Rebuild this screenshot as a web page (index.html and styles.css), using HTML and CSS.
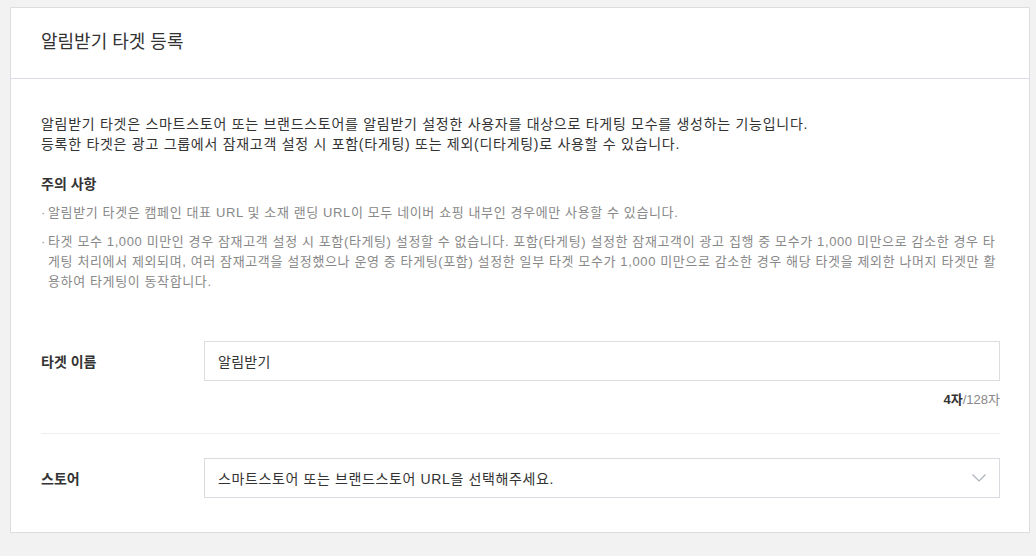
FILE: index.html
```html
<!DOCTYPE html>
<html lang="ko">
<head>
<meta charset="utf-8">
<title>알림받기 타겟 등록</title>
<link rel="stylesheet" href="styles.css">
</head>
<body>
<div class="page">
  <section class="card">
    <header class="card-header">
      <h1 class="title">알림받기 타겟 등록</h1>
    </header>
    <div class="card-body">
      <p class="intro">알림받기 타겟은 스마트스토어 또는 브랜드스토어를 알림받기 설정한 사용자를 대상으로 타게팅 모수를 생성하는 기능입니다.<br>등록한 타겟은 광고 그룹에서 잠재고객 설정 시 포함(타게팅) 또는 제외(디타게팅)로 사용할 수 있습니다.</p>
      <h2 class="notice-title">주의 사항</h2>
      <ul class="notice-list">
        <li>알림받기 타겟은 캠페인 대표 URL 및 소재 랜딩 URL이 모두 네이버 쇼핑 내부인 경우에만 사용할 수 있습니다.</li>
        <li>타겟 모수 1,000 미만인 경우 잠재고객 설정 시 포함(타게팅) 설정할 수 없습니다. 포함(타게팅) 설정한 잠재고객이 광고 집행 중 모수가 1,000 미만으로 감소한 경우 타게팅 처리에서 제외되며, 여러 잠재고객을 설정했으나 운영 중 타게팅(포함) 설정한 일부 타겟 모수가 1,000 미만으로 감소한 경우 해당 타겟을 제외한 나머지 타겟만 활용하여 타게팅이 동작합니다.</li>
      </ul>

      <div class="form">
        <div class="field">
          <div class="field-row">
            <label class="field-label" for="name">타겟 이름</label>
            <div class="input-box">
              <input id="name" class="text-input" type="text" value="알림받기">
            </div>
          </div>
          <div class="counter"><strong>4자</strong>/128자</div>
        </div>
        <div class="field field-last">
          <div class="field-row">
            <span class="field-label">스토어</span>
            <div class="select-box">
              <span class="select-text">스마트스토어 또는 브랜드스토어 URL을 선택해주세요.</span>
              <svg class="chevron" width="14" height="8" viewBox="0 0 14 8" aria-hidden="true"><path d="M0.5 0.5 L7 7 L13.5 0.5" fill="none" stroke="#adb1bb" stroke-width="1.2"/></svg>
            </div>
          </div>
        </div>
      </div>
    </div>
  </section>
</div>
</body>
</html>
```

FILE: styles.css
```css
* { box-sizing: border-box; }

html, body {
  margin: 0;
  padding: 0;
  background: #f2f2f2;
}

body {
  font-family: "Liberation Sans", "Noto Sans CJK KR", "Noto Sans", sans-serif;
  color: #333;
  font-size: 14px;
}

.page {
  padding: 7px 6px 0 10px;
}

.card {
  background: #fff;
  border: 1px solid #dddde0;
  width: 1020px;
}

.card-header {
  height: 71px;
  border-bottom: 1px solid #dcdce6;
  display: flex;
  align-items: center;
  padding: 0 30px;
}

.title {
  margin: 0;
  font-size: 18px;
  font-weight: 400;
  color: #333;
  line-height: 24px;
  padding-bottom: 2px;
}

.card-body {
  padding: 35px 29px 34px 30px;
}

.intro {
  margin: 0;
  font-size: 14px;
  line-height: 20px;
  letter-spacing: 0.72px;
  color: #333;
}

.notice-title {
  margin: 20px 0 0;
  font-size: 14px;
  font-weight: 700;
  line-height: 20px;
  color: #333;
}

.notice-list {
  list-style: none;
  margin: 9px 0 0;
  padding: 0;
}

.notice-list li {
  position: relative;
  padding-left: 7px;
  font-size: 13px;
  line-height: 20px;
  letter-spacing: 0.62px;
  color: #888;
  word-break: break-all;
}

.notice-list li + li {
  margin-top: 9px;
}

.notice-list li::before {
  content: "·";
  position: absolute;
  left: 0;
  top: 0;
  color: #999;
}

.form {
  margin-top: 49px;
}

.field {
  padding-bottom: 23px;
  border-bottom: 1px solid #eeeeee;
}

.field-last {
  border-bottom: 0;
  padding-top: 24px;
  padding-bottom: 0;
}

.field-row {
  display: flex;
  align-items: center;
}

.field-label {
  width: 163px;
  flex: none;
  font-size: 14px;
  font-weight: 700;
  color: #333;
}

.input-box,
.select-box {
  flex: 1;
  height: 40px;
  border: 1px solid #dddddd;
  display: flex;
  align-items: center;
  padding: 0 13px;
}

.select-box {
  border-color: #dadbe0;
  justify-content: space-between;
}

.text-input {
  border: 0;
  outline: none;
  padding: 0;
  width: 100%;
  font-family: inherit;
  font-size: 14px;
  letter-spacing: 0.3px;
  color: #333;
  background: transparent;
}

.select-text {
  font-size: 14px;
  letter-spacing: 0.62px;
  color: #333;
}

.chevron {
  display: block;
}

.counter {
  margin-top: 9px;
  text-align: right;
  font-size: 13px;
  line-height: 20px;
  color: #888;
}

.counter strong {
  color: #333;
  font-weight: 700;
}
```
